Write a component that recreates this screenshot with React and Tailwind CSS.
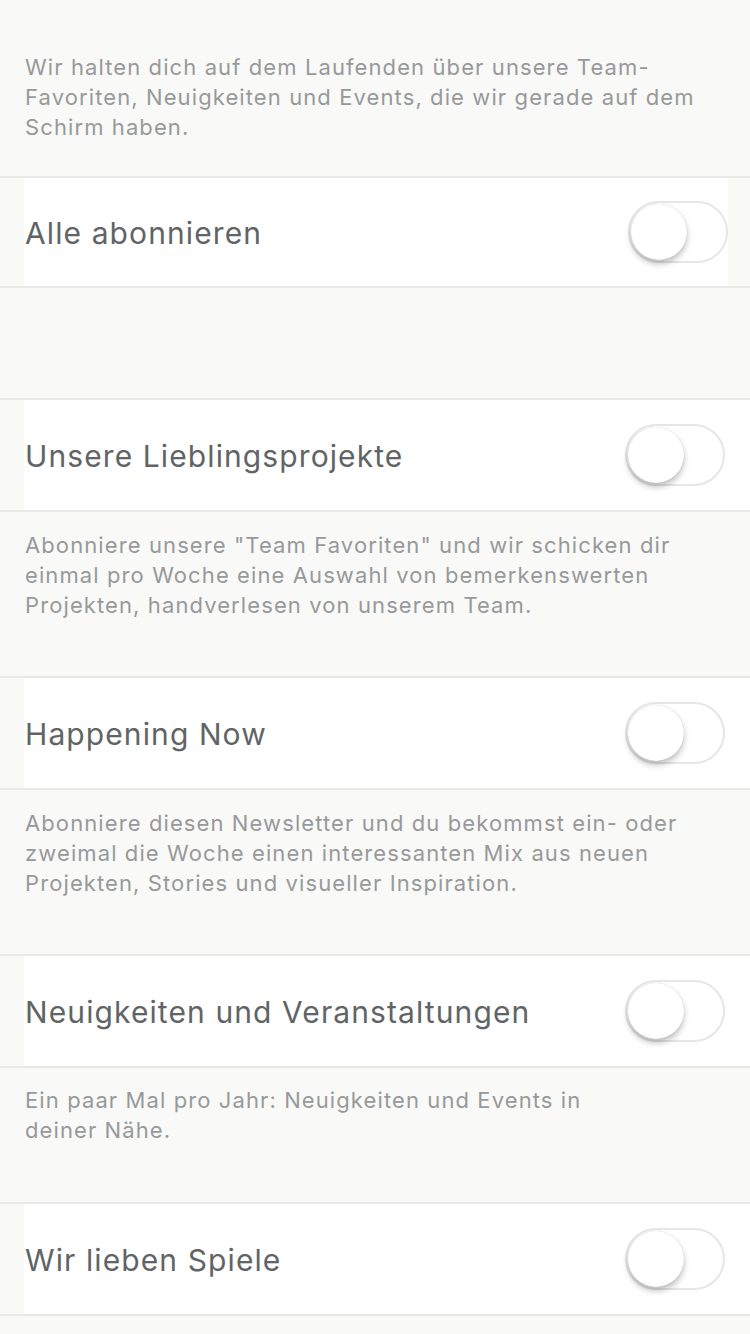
import React, { useState } from "react";

const Toggle = ({ on, onChange }) => (
  <button
    type="button"
    onClick={onChange}
    className={`relative w-[100px] h-[62px] rounded-full border-2 shrink-0 transition-colors ${
      on ? "bg-[#4cd964] border-[#4cd964]" : "bg-white border-[#e6e6e6]"
    }`}
  >
    <span
      className={`absolute top-[1px] w-[56px] h-[56px] rounded-full bg-white shadow-[0_4px_6px_rgba(0,0,0,0.25),0_0_1px_rgba(0,0,0,0.2)] transition-all ${
        on ? "left-[40px]" : "left-[1px]"
      }`}
    />
  </button>
);

const Row = ({ title, on, onChange, first }) => (
  <div className="border-y-2 border-[#e8e8e7] pl-[24px] bg-[#f9f9f8]">
    <div
      className={`bg-white flex items-center justify-between ${
        first ? "h-[108px] mr-[22px]" : "h-[110px] pr-[25px]"
      }`}
    >
      <span className="text-[30px] tracking-[1.1px] text-[#616465] pl-[1px] pt-[2px]">{title}</span>
      <Toggle on={on} onChange={onChange} />
    </div>
  </div>
);

const Desc = ({ children, className = "" }) => (
  <p
    className={`pl-[25px] pr-[45px] text-[22px] tracking-[1.1px] leading-[30px] text-[#97999a] ${className}`}
  >
    {children}
  </p>
);

export default function App() {
  const [state, setState] = useState({
    all: false,
    fav: false,
    now: false,
    news: false,
    games: false,
  });
  const flip = (k) => setState((s) => ({ ...s, [k]: !s[k] }));

  return (
    <div className="min-h-screen w-[750px] bg-[#f9f9f8] font-['Inter','Liberation_Sans',sans-serif] overflow-hidden">
      <Desc className="pt-[52px] pb-[34px]">
        Wir halten dich auf dem Laufenden über unsere Team-Favoriten, Neuigkeiten und Events, die wir gerade auf dem
        Schirm haben.
      </Desc>
      <Row title="Alle abonnieren" on={state.all} onChange={() => flip("all")} first />
      <div className="h-[110px]" />
      <Row title="Unsere Lieblingsprojekte" on={state.fav} onChange={() => flip("fav")} />
      <Desc className="pt-[18px] pb-[56px]">
        Abonniere unsere "Team Favoriten" und wir schicken dir einmal pro Woche eine Auswahl von bemerkenswerten
        Projekten, handverlesen von unserem Team.
      </Desc>
      <Row title="Happening Now" on={state.now} onChange={() => flip("now")} />
      <Desc className="pt-[18px] pb-[56px]">
        Abonniere diesen Newsletter und du bekommst ein- oder zweimal die Woche einen interessanten Mix aus neuen
        Projekten, Stories und visueller Inspiration.
      </Desc>
      <Row title="Neuigkeiten und Veranstaltungen" on={state.news} onChange={() => flip("news")} />
      <Desc className="pt-[17px] pb-[57px]">
        Ein paar Mal pro Jahr: Neuigkeiten und Events in
        <br />
        deiner Nähe.
      </Desc>
      <Row title="Wir lieben Spiele" on={state.games} onChange={() => flip("games")} />
    </div>
  );
}
